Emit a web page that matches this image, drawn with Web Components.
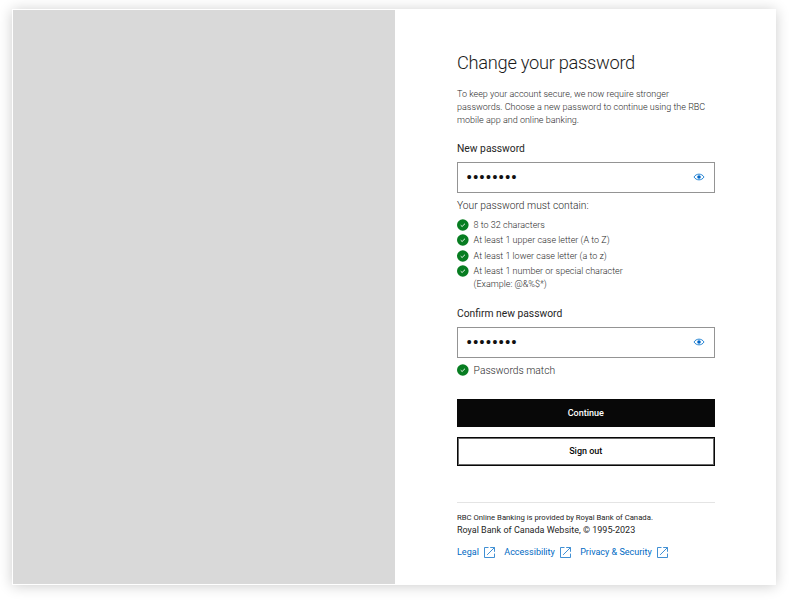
<!DOCTYPE html>
<html lang="en">
<head>
<meta charset="utf-8">
<title>Change your password</title>
<style>
  body {
    background: #ffffff;
    font-family: Roboto, sans-serif;
    height: 600px;
    margin: 0;
    overflow: hidden;
  }
</style>
</head>
<body>
<rbc-layout>
  <rbc-heading>
    Change your password
    <span slot="copy">To keep your account secure, we now require stronger<br>passwords. Choose a new password to continue using the RBC<br>mobile app and online banking.</span>
  </rbc-heading>
  <rbc-password label="New password" value="password">
    <rbc-requirements label="Your password must contain:">
      <rbc-check>8 to 32 characters</rbc-check>
      <rbc-check>At least 1 upper case letter (A to Z)</rbc-check>
      <rbc-check>At least 1 lower case letter (a to z)</rbc-check>
      <rbc-check>At least 1 number or special character<br>(Example: @&amp;%$*)</rbc-check>
    </rbc-requirements>
  </rbc-password>
  <rbc-password label="Confirm new password" value="password">
    <rbc-check large>Passwords match</rbc-check>
  </rbc-password>
  <rbc-button slot="actions">Continue</rbc-button>
  <rbc-button slot="actions" secondary>Sign out</rbc-button>
  <rbc-footer slot="footer">
    <span slot="provider">RBC Online Banking is provided by Royal Bank of Canada.</span>
    <span slot="copyright">Royal Bank of Canada Website, © 1995-2023</span>
    <rbc-link>Legal</rbc-link>
    <rbc-link>Accessibility</rbc-link>
    <rbc-link>Privacy &amp; Security</rbc-link>
  </rbc-footer>
</rbc-layout>

<script>
// Shared setup
class RBCElement extends HTMLElement {
  constructor( markup ) {
    super();

    const template = document.createElement( 'template' );
    template.innerHTML = markup;

    // Root
    this.attachShadow( {mode: 'open'} );
    this.shadowRoot.appendChild( template.content.cloneNode( true ) );
  }
}

class RBCLayout extends RBCElement {
  constructor() {
    super( /* template */ `
      <style>
        :host {
          box-sizing: border-box;
          display: block;
          height: 600px;
          padding: 9px 13px 15.5px 12px;
        }

        article {
          background: #ffffff;
          box-shadow: 0 1px 13px rgba( 0, 0, 0, 0.20 );
          box-sizing: border-box;
          display: grid;
          grid-template-columns: 382px 1fr;
          height: 100%;
          padding: 1px;
        }

        aside {
          background: #d9d9d9;
        }

        main {
          box-sizing: border-box;
          display: flex;
          flex-direction: column;
          padding: 40.4px 0 0 62px;
          width: 319.5px;
        }

        .actions {
          display: flex;
          flex-direction: column;
          gap: 10px;
          margin-top: 22.4px;
        }

        slot[name=footer] {
          display: block;
          margin-top: 36px;
        }
      </style>
      <article>
        <aside></aside>
        <main>
          <slot></slot>
          <div class="actions"><slot name="actions"></slot></div>
          <slot name="footer"></slot>
        </main>
      </article>
    ` );
  }
}

class RBCHeading extends RBCElement {
  constructor() {
    super( /* template */ `
      <style>
        :host {
          display: block;
          margin-bottom: -0.5px;
          white-space: nowrap;
        }

        h1 {
          color: #1a1a1a;
          font-size: 18.3px;
          font-weight: 300;
          letter-spacing: -0.3px;
          line-height: 26px;
          margin: 0;
        }

        p {
          color: #2b2b2b;
          font-size: 9px;
          font-weight: 300;
          line-height: 13px;
          margin: 11.6px 0 0 0;
        }
      </style>
      <h1><slot></slot></h1>
      <p><slot name="copy"></slot></p>
    ` );
  }
}

class RBCPassword extends RBCElement {
  constructor() {
    super( /* template */ `
      <style>
        :host {
          display: block;
          margin-top: 15.3px;
        }

        label {
          color: #252525;
          display: block;
          font-size: 10.3px;
          line-height: 14px;
        }

        .field {
          align-items: center;
          border: 1px solid #949494;
          box-sizing: border-box;
          display: flex;
          height: 31px;
          margin: 6px 0;
          padding: 0 9px 0 8px;
        }

        input {
          background: none;
          border: none;
          color: #111111;
          flex: 1;
          font-family: Roboto, sans-serif;
          font-size: 19px;
          height: 29px;
          min-width: 0;
          outline: none;
          padding: 0;
        }

        svg {
          height: 10px;
          width: 12px;
        }
      </style>
      <label for="input"></label>
      <div class="field">
        <input id="input" type="password">
        <svg viewBox="0 0 12 10" fill="none" stroke="#0070cc">
          <path d="M1 5 C3.2 1.2 8.8 1.2 11 5 C8.8 8.8 3.2 8.8 1 5 Z" stroke-width="0.85"/>
          <circle cx="6" cy="5" r="1.8" fill="#0066c8" stroke="none"/>
        </svg>
      </div>
      <slot></slot>
    ` );

    // Elements
    this.$label = this.shadowRoot.querySelector( 'label' );
    this.$input = this.shadowRoot.querySelector( 'input' );
  }

  connectedCallback() {
    this.$label.textContent = this.getAttribute( 'label' );
    this.$input.value = this.getAttribute( 'value' );
  }
}

class RBCRequirements extends RBCElement {
  constructor() {
    super( /* template */ `
      <style>
        :host {
          display: block;
        }

        p {
          color: #2b2b2b;
          font-size: 10.3px;
          font-weight: 300;
          line-height: 14px;
          margin: 0 0 6px 0;
        }

        div {
          display: flex;
          flex-direction: column;
          gap: 2.5px;
        }
      </style>
      <p></p>
      <div><slot></slot></div>
    ` );
  }

  connectedCallback() {
    this.shadowRoot.querySelector( 'p' ).textContent = this.getAttribute( 'label' );
  }
}

class RBCCheck extends RBCElement {
  constructor() {
    super( /* template */ `
      <style>
        :host {
          align-items: flex-start;
          color: #2b2b2b;
          display: flex;
          font-size: 9px;
          font-weight: 300;
          gap: 4.6px;
          line-height: 13px;
        }

        :host( [large] ) {
          font-size: 10.3px;
        }

        svg {
          flex: none;
          height: 12px;
          width: 12px;
        }
      </style>
      <svg viewBox="0 0 12 12">
        <circle cx="5.8" cy="6" r="5.8" fill="#077d21"/>
        <path d="M3.7 6.2 L5.1 7.5 L8 4.7" fill="none" stroke="#ffffff" stroke-width="0.9"/>
      </svg>
      <span><slot></slot></span>
    ` );
  }
}

class RBCButton extends RBCElement {
  constructor() {
    super( /* template */ `
      <style>
        :host {
          display: block;
        }

        button {
          background: #080808;
          border: 1px solid #080808;
          border-radius: 0;
          box-sizing: border-box;
          color: #ffffff;
          cursor: pointer;
          display: block;
          font-family: Roboto, sans-serif;
          font-size: 9px;
          font-weight: 500;
          height: 28.3px;
          padding: 0;
          width: 100%;
        }

        /* Inner half of the outline is softer than the edge */
        :host( [secondary] ) button {
          background: #ffffff;
          box-shadow: inset 0 0 0 1px #6a6a6a;
          color: #080808;
        }
      </style>
      <button type="button"><slot></slot></button>
    ` );
  }
}

class RBCFooter extends RBCElement {
  constructor() {
    super( /* template */ `
      <style>
        :host {
          border-top: 1px solid #e4e4e4;
          color: #252525;
          display: block;
          padding-top: 9px;
          white-space: nowrap;
        }

        p {
          font-size: 9px;
          line-height: 12px;
          margin: 0;
        }

        .provider {
          font-size: 7.73px;
        }

        nav {
          display: flex;
          gap: 9.4px;
          margin-top: 10.4px;
        }
      </style>
      <p class="provider"><slot name="provider"></slot></p>
      <p><slot name="copyright"></slot></p>
      <nav><slot></slot></nav>
    ` );
  }
}

class RBCLink extends RBCElement {
  constructor() {
    super( /* template */ `
      <style>
        :host {
          display: block;
        }

        a {
          align-items: center;
          color: #006ac3;
          display: flex;
          font-size: 9.04px;
          gap: 5px;
          line-height: 13px;
          text-decoration: none;
        }

        svg {
          height: 11px;
          width: 11px;
        }
      </style>
      <a href="#">
        <slot></slot>
        <svg viewBox="0 0 11 11" fill="none" stroke="#2b83cf" stroke-width="0.9">
          <path d="M4.5 0.5 H0.5 V10.5 H10.5 V6.6"/>
          <path d="M6.2 0.5 H10.5 V4.8 M10.5 0.5 L3.1 7.9"/>
        </svg>
      </a>
    ` );
  }
}

window.customElements.define( 'rbc-layout', RBCLayout );
window.customElements.define( 'rbc-heading', RBCHeading );
window.customElements.define( 'rbc-password', RBCPassword );
window.customElements.define( 'rbc-requirements', RBCRequirements );
window.customElements.define( 'rbc-check', RBCCheck );
window.customElements.define( 'rbc-button', RBCButton );
window.customElements.define( 'rbc-footer', RBCFooter );
window.customElements.define( 'rbc-link', RBCLink );
</script>
</body>
</html>
